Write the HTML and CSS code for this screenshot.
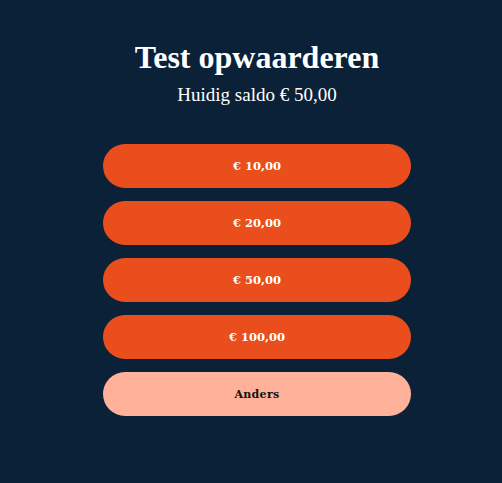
FILE: index.html
```html
<!DOCTYPE html>
<html lang="nl">
<head>
<meta charset="utf-8">
<title>Test opwaarderen</title>
<link rel="stylesheet" href="styles.css">
</head>
<body>
<main class="page">
  <header class="head">
    <h1 class="title">Test opwaarderen</h1>
    <p class="balance">Huidig saldo € 50,00</p>
  </header>
  <div class="options">
    <button class="btn btn-primary">€ 10,00</button>
    <button class="btn btn-primary">€ 20,00</button>
    <button class="btn btn-primary">€ 50,00</button>
    <button class="btn btn-primary">€ 100,00</button>
    <button class="btn btn-light">Anders</button>
  </div>
</main>
</body>
</html>
```
FILE: styles.css
```css
html, body {
  margin: 0;
  padding: 0;
  background: #0b2138;
  height: 100%;
}
body {
  font-family: "Liberation Serif", "Times New Roman", serif;
  color: #ffffff;
}
.page {
  display: flex;
  flex-direction: column;
  align-items: center;
  padding-top: 38px;
  padding-left: 12px;
}
.head {
  display: flex;
  flex-direction: column;
  align-items: center;
}
.title {
  margin: 0;
  font-size: 32px;
  font-weight: 700;
  line-height: 38px;
}
.balance {
  margin: 8px 0 0;
  font-size: 19px;
  line-height: 22px;
}
.options {
  margin-top: 38px;
  width: 308px;
  display: flex;
  flex-direction: column;
  gap: 13px;
}
.btn {
  height: 44px;
  border: none;
  border-radius: 22px;
  font-family: "DejaVu Serif", serif;
  font-weight: 700;
  font-size: 11.5px;
  cursor: pointer;
}
.btn-primary {
  background: #e94e1c;
  color: #ffffff;
}
.btn-light {
  background: #ffb199;
  color: #111111;
  font-size: 11px;
  letter-spacing: 0.3px;
}
```
